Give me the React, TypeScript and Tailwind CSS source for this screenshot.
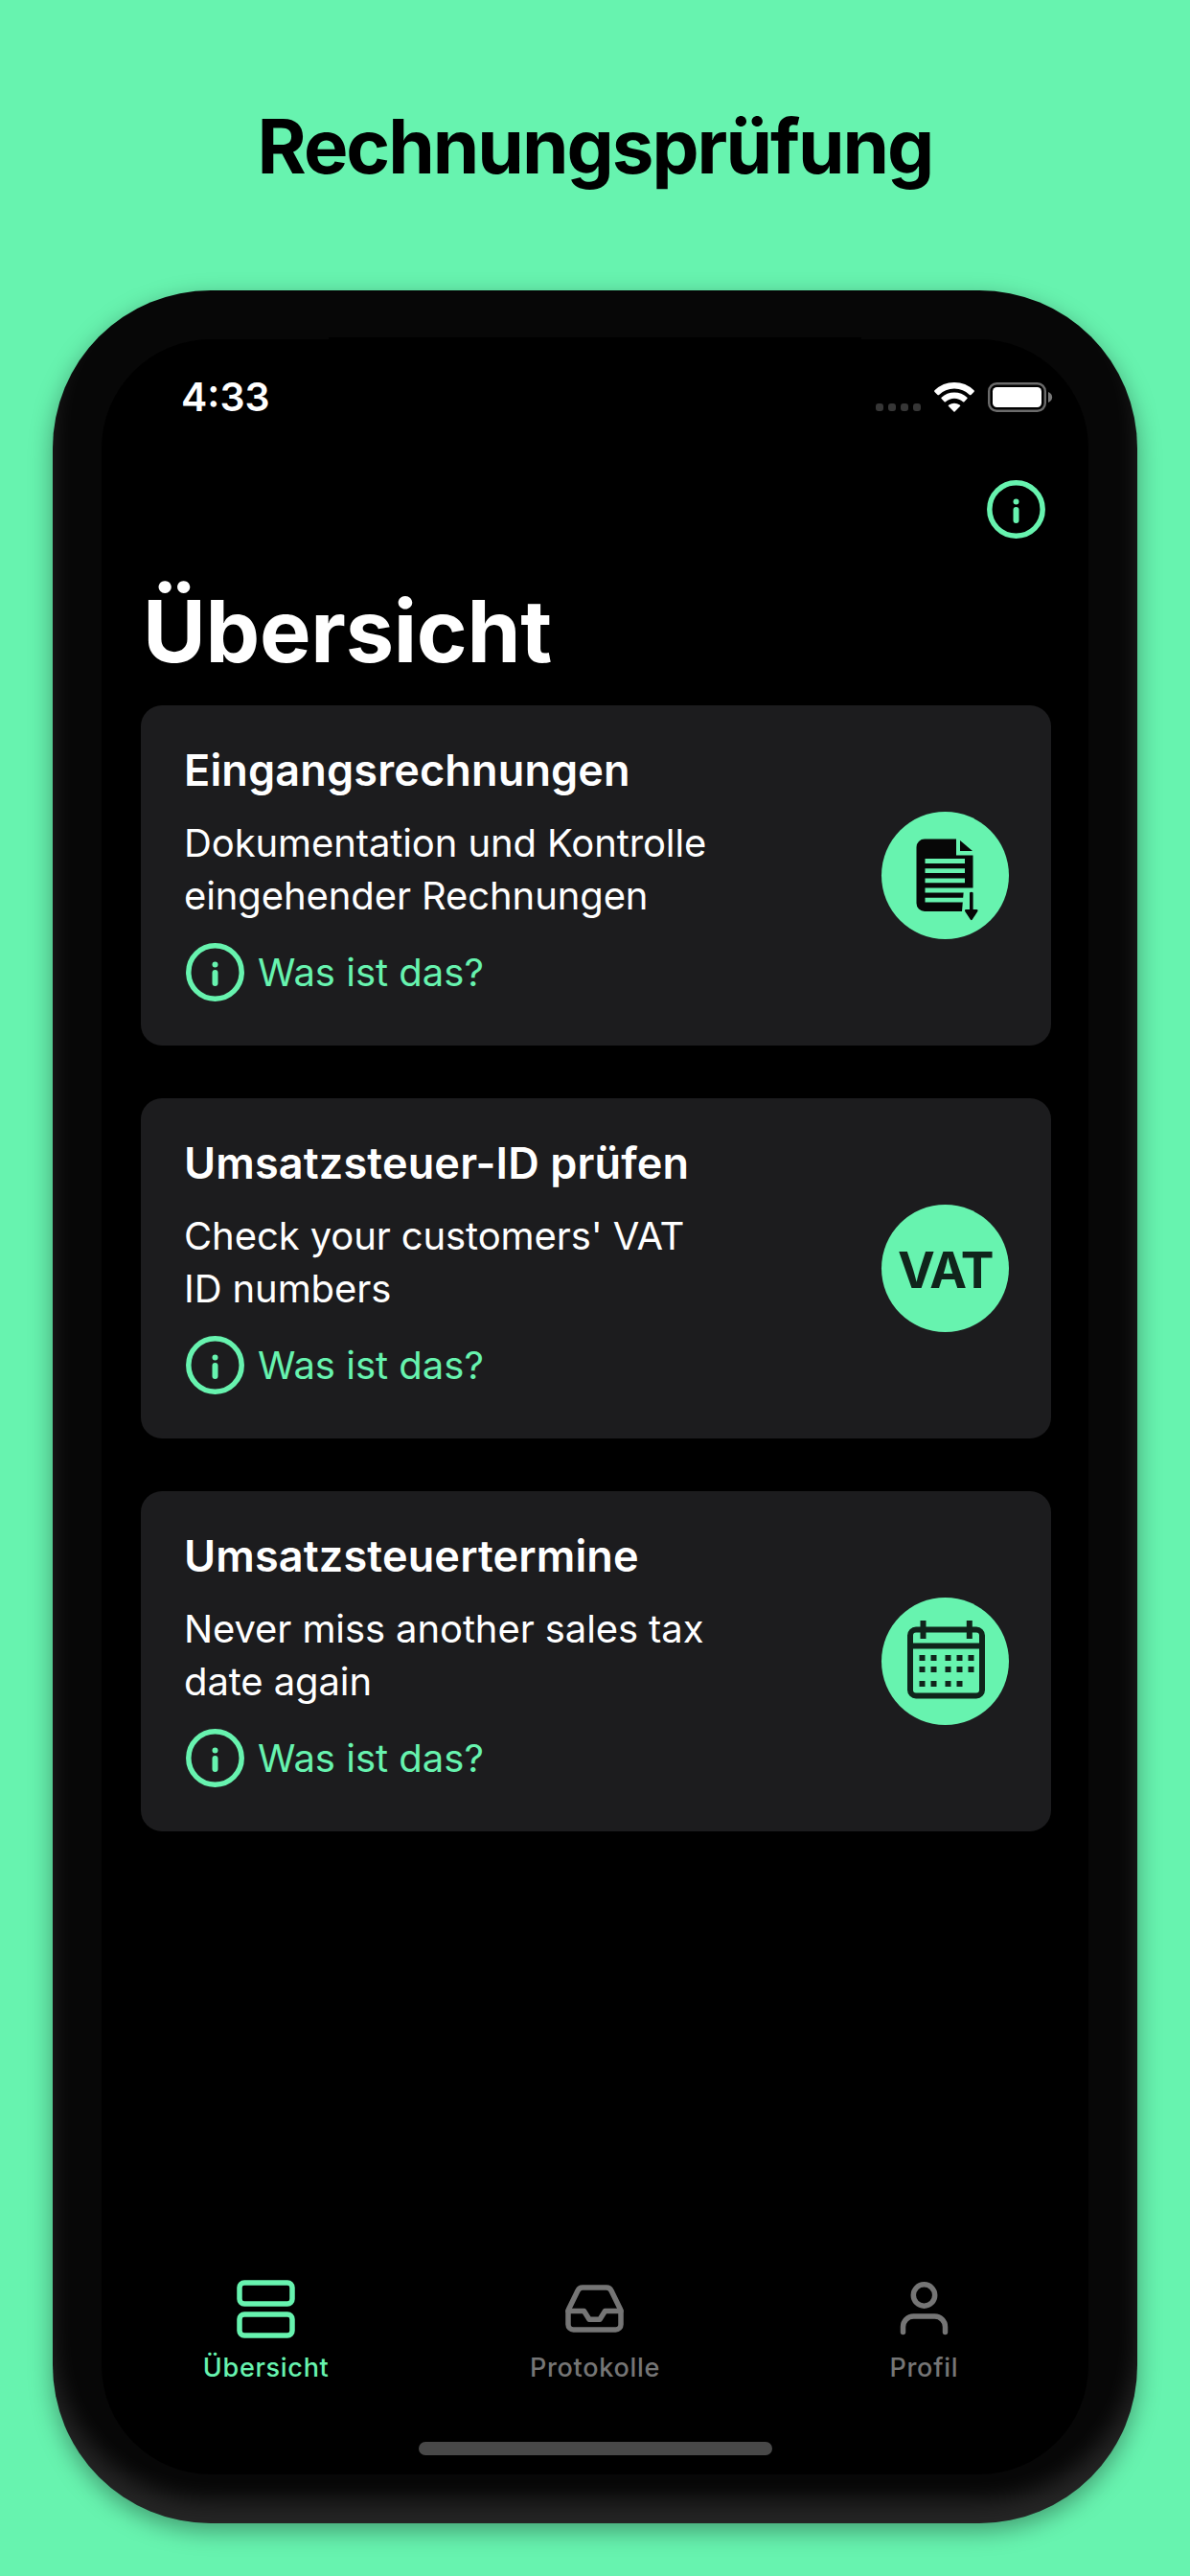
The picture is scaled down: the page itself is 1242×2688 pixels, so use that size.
import type { ReactNode } from "react";

type Entry = {
  title: string;
  lines: string[];
  icon: ReactNode;
};

const ENTRIES: Entry[] = [
  {
    title: "Eingangsrechnungen",
    lines: ["Dokumentation und Kontrolle", "eingehender Rechnungen"],
    icon: <InvoiceIcon />,
  },
  {
    title: "Umsatzsteuer-ID prüfen",
    lines: ["Check your customers' VAT", "ID numbers"],
    icon: (
      <span className="pt-[4px] text-[52px] font-bold leading-none tracking-[-1.5px] text-[#10241b]">VAT</span>
    ),
  },
  {
    title: "Umsatzsteuertermine",
    lines: ["Never miss another sales tax", "date again"],
    icon: <CalendarIcon />,
  },
];

export default function App() {
  return (
    <div className="flex h-[2688px] w-[1242px] flex-col items-center overflow-hidden bg-[#67f3af] font-['Inter','Liberation_Sans',sans-serif]">
      <h1 className="flex h-[303px] items-center whitespace-nowrap pt-[3px] text-[78px] font-bold leading-none tracking-[-2px] text-black">
        Rechnungsprüfung
      </h1>

      <div className="h-[2330px] w-[1132px] rounded-[165px] bg-[#070707] p-[51px] shadow-[0_8px_24px_rgba(0,0,0,0.35),inset_0_-24px_24px_rgba(255,255,255,0.12)]">
        <div className="relative flex h-full flex-col rounded-[114px] bg-black text-white">
          {/* notch edge */}
          <div className="absolute -top-[2px] left-[237px] h-[2px] w-[556px] bg-black" />
          <StatusBar />
          <Screen />
          <TabBar />
        </div>
      </div>
    </div>
  );
}

function StatusBar() {
  return (
    <div className="flex h-[122px] shrink-0 items-end justify-between pl-[83px] pr-[37px]">
      <span className="mb-[41px] text-[41px] font-semibold leading-[41px]">4:33</span>
      <div className="mb-[46px] flex items-end">
        <div className="mb-px mr-[14px] flex gap-[5px]">
          {[0, 1, 2, 3].map((i) => (
            <span key={i} className="size-2 rounded-[3px] bg-[#363636]" />
          ))}
        </div>
        <svg className="mr-[14px] h-[31px] w-[42px]" viewBox="0 0 42 31" fill="#fff">
          <path d="M21 31 14.8 24.8Q14.5 24 15.3 23.4Q21 20 26.7 23.4Q27.5 24 27.2 24.8Z" />
          <path d="M21 10.4q-7.8 0-13.4 5.3-.7.7 0 1.4l3 3.1q.7.6 1.4 0Q15.9 16.7 21 16.7t9 3.5q.7.6 1.4 0l3-3.1q.7-.7 0-1.4Q28.8 10.4 21 10.4Z" />
          <path d="M21 0Q9 0 .5 8.3q-.8.8 0 1.6l3 3.1q.8.7 1.6 0Q11.5 6.5 21 6.5T36.9 13q.8.7 1.6 0l3-3.1q.8-.8 0-1.6Q33 0 21 0Z" />
        </svg>
        <svg className="h-[31px] w-[68px]" viewBox="0 0 68 31">
          <rect x="1.2" y="1.2" width="58.6" height="28.6" rx="8" fill="none" stroke="#6b6b6b" strokeWidth="2.4" />
          <rect x="5" y="5" width="51" height="21" rx="4.5" fill="#fff" />
          <path d="M63 10v11c5.5-2 5.5-9 0-11Z" fill="#777" />
        </svg>
      </div>
    </div>
  );
}

function Screen() {
  return (
    <main className="flex flex-1 flex-col px-[41px]">
      <div className="flex h-[110px] justify-end pr-[4px] pt-[25px]">
        <InfoIcon />
      </div>
      <h2 className="h-[150px] pl-[2px] pt-[28px] text-[90px] font-bold leading-[90px] tracking-[-0.3px]">
        Übersicht
      </h2>
      <div className="flex flex-col gap-[55px]">
        {ENTRIES.map((entry) => (
          <Card key={entry.title} entry={entry} />
        ))}
      </div>
    </main>
  );
}

function Card({ entry }: { entry: Entry }) {
  return (
    <section className="flex h-[355px] w-[950px] items-center justify-between rounded-[22px] bg-[#1c1c1e] pl-[45px] pr-[44px]">
      <div className="h-full whitespace-nowrap pt-[41px]">
        <h3 className="text-[45px] font-semibold leading-[54px] tracking-[0.15px]">{entry.title}</h3>
        <p className="mt-[21px] text-[40px] leading-[55px] tracking-[-0.1px]">
          {entry.lines.map((line) => (
            <span key={line} className="block">
              {line}
            </span>
          ))}
        </p>
        <button className="mt-[22px] flex items-center gap-[14px] pl-[2px] text-[40px] leading-[61px] text-[#67f3af]">
          <InfoIcon />
          Was ist das?
        </button>
      </div>
      <div className="flex size-[133px] items-center justify-center rounded-full bg-[#67f3af]">{entry.icon}</div>
    </section>
  );
}

function TabBar() {
  return (
    <nav className="flex h-[223px] shrink-0 flex-col items-center">
      <div className="flex w-full">
        <Tab label="Übersicht" active>
          <rect x="3" y="3" width="55" height="22" rx="5" />
          <rect x="3" y="36" width="55" height="22" rx="5" />
        </Tab>
        <Tab label="Protokolle">
          <path d="M3 32.5H19.500L25 41.200h11l5.500-8.700H58" />
          <path d="M13 11.300 3.600 30.500q-.6 1.300-.6 3V46.500a5.500 5.500 0 0 0 5.500 5.500h44a5.500 5.500 0 0 0 5.500-5.500V33.500q0-1.700-.6-3L48 11.300a5.500 5.500 0 0 0-5-3.300h-25a5.500 5.500 0 0 0-5 3.300Z" />
        </Tab>
        <Tab label="Profil">
          <circle cx="30.500" cy="16" r="11.200" />
          <path d="M8.500 54.500v-5.500a11 11 0 0 1 11-11h22a11 11 0 0 1 11 11v5.500" />
        </Tab>
      </div>
      <div className="mt-[61px] h-[14px] w-[369px] rounded-[7px] bg-[#484848]" />
    </nav>
  );
}

function Tab({ label, active, children }: { label: string; active?: boolean; children: ReactNode }) {
  return (
    <button className={`flex flex-1 flex-col items-center ${active ? "text-[#67f3af]" : "text-[#757575]"}`}>
      <svg
        className="mt-[20px] size-[61px]"
        viewBox="0 0 61 61"
        fill="none"
        stroke="currentColor"
        strokeWidth="5.500"
        strokeLinecap="round"
        strokeLinejoin="round"
      >
        {children}
      </svg>
      <span className="mt-[15px] text-[27px] font-medium leading-[32px] tracking-[0.7px]">{label}</span>
    </button>
  );
}

function InfoIcon() {
  return (
    <svg className="size-[61px] shrink-0" viewBox="0 0 61 61" fill="none" stroke="#67f3af">
      <circle cx="30.500" cy="30.500" r="27.700" strokeWidth="5.500" />
      <path d="M30.500 31v11" strokeWidth="6" strokeLinecap="round" />
      <circle cx="30.500" cy="22.500" r="3" fill="#67f3af" stroke="none" />
    </svg>
  );
}

function InvoiceIcon() {
  return (
    <svg className="size-[133px]" viewBox="0 0 133 133" fill="#070707">
      <path d="M45 28.500H78v17H95.500V80H86L84 104H45a8.500 8.500 0 0 1-8.500-8.500V37a8.500 8.500 0 0 1 8.500-8.500Z" />
      <path d="M82 30v11h13Z" />
      <path
        d="M45.500 51.500H87M45.500 61.700H87M45.500 71.900H87M45.500 82H96M45.500 92.200H86"
        stroke="#67f3af"
        strokeWidth="4.800"
      />
      <path d="M92 84.500q1.800-1.500 3.600 0V102H99q2.500 0 1 2.500L94.800 112.500q-1 1.500-2 0L87.500 104.500q-1.500-2.500 1-2.500H92Z" />
    </svg>
  );
}

function CalendarIcon() {
  const cols = [42.5, 54.5, 69.5, 81.5, 93.5];
  const rows = [63, 75, 90];
  return (
    <svg className="size-[133px]" viewBox="0 0 133 133" fill="#10241b">
      <rect x="30" y="33.500" width="75" height="69" rx="6" fill="none" stroke="#10241b" strokeWidth="6" />
      <path d="M30 50.500H105M43.500 24V43M91.800 24V43" stroke="#10241b" strokeWidth="6" />
      {rows.map((y, r) =>
        cols
          // the last week ends one day early
          .filter((_, c) => !(r === 2 && c === 4))
          .map((x) => <rect key={`${x}-${y}`} x={x - 3} y={y - 3} width="6" height="6" />)
      )}
    </svg>
  );
}
